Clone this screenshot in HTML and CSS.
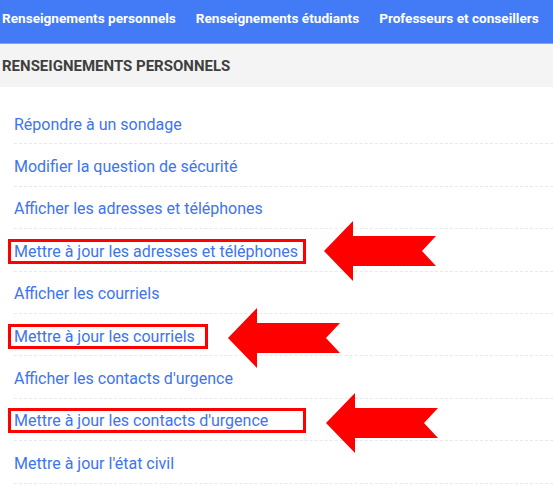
FILE: index.html
```html
<!DOCTYPE html>
<html lang="fr">
<head>
  <meta charset="UTF-8">
  <title>Renseignements personnels</title>
  <link rel="stylesheet" href="styles.css">
</head>
<body>
  <nav class="topnav">
    <a href="#">Renseignements personnels</a>
    <a href="#">Renseignements étudiants</a>
    <a href="#">Professeurs et conseillers</a>
  </nav>

  <h2 class="section-title">RENSEIGNEMENTS PERSONNELS</h2>

  <ul class="menu">
    <li><a href="#">Répondre à un sondage</a></li>
    <li><a href="#">Modifier la question de sécurité</a></li>
    <li><a href="#">Afficher les adresses et téléphones</a></li>
    <li>
      <a class="mark mark-wide" href="#">Mettre à jour les adresses et téléphones</a>
      <svg class="arrow" viewBox="0 0 112 60"><polygon points="0,30 29,0 29,15 112,15 98,30 112,45 29,45 29,60"/></svg>
    </li>
    <li><a href="#">Afficher les courriels</a></li>
    <li>
      <a class="mark" href="#">Mettre à jour les courriels</a>
      <svg class="arrow arrow-low" viewBox="0 0 112 60"><polygon points="0,30 29,0 29,15 112,15 98,30 112,45 29,45 29,60"/></svg>
    </li>
    <li><a href="#">Afficher les contacts d'urgence</a></li>
    <li>
      <a class="mark mark-wide" href="#">Mettre à jour les contacts d'urgence</a>
      <svg class="arrow arrow-low" viewBox="0 0 112 60"><polygon points="0,30 29,0 29,15 112,15 98,30 112,45 29,45 29,60"/></svg>
    </li>
    <li><a href="#">Mettre à jour l'état civil</a></li>
  </ul>
</body>
</html>
```

FILE: styles.css
```css
body {
  margin: 0;
  font-family: Roboto, "Liberation Sans", sans-serif;
  background: #fff;
}
.topnav {
  display: flex;
  gap: 20px;
  height: 44px;
  padding: 8px 0 0 2px;
  box-sizing: border-box;
  background: #437af5;
  border-bottom: 1px solid #7ea3f8;
}
.topnav a {
  color: #fff;
  font-weight: bold;
  font-size: 13.6px;
  line-height: 20px;
  text-decoration: none;
  white-space: nowrap;
}
.section-title {
  margin: 0;
  height: 43px;
  line-height: 45px;
  padding-left: 2px;
  background: #f4f4f4;
  color: #3f3f3f;
  font-size: 15px;
  font-weight: bold;
}
.menu {
  list-style: none;
  margin: 0;
  padding: 15px 0 0 14px;
}
.menu li {
  display: flex;
  align-items: center;
  height: 42.4px;
  box-sizing: border-box;
  padding-top: 3px;
  border-bottom: 1px dashed #e8e8e8;
}
.menu a {
  color: #3d74ef;
  font-size: 16px;
  text-decoration: none;
  white-space: nowrap;
}
.mark {
  display: block;
  margin: 0 0 0 -6px;
  padding: 0 10px 0 3px;
  height: 25px;
  line-height: 20px;
  box-sizing: border-box;
  border: 3px solid #f00;
}
.mark-wide {
  width: 298px;
}
.arrow {
  flex: none;
  width: 112px;
  height: 60px;
  margin-left: 18px;
  fill: #f00;
}
.arrow-low {
  margin-top: 4px;
  margin-left: 20px;
}
```
